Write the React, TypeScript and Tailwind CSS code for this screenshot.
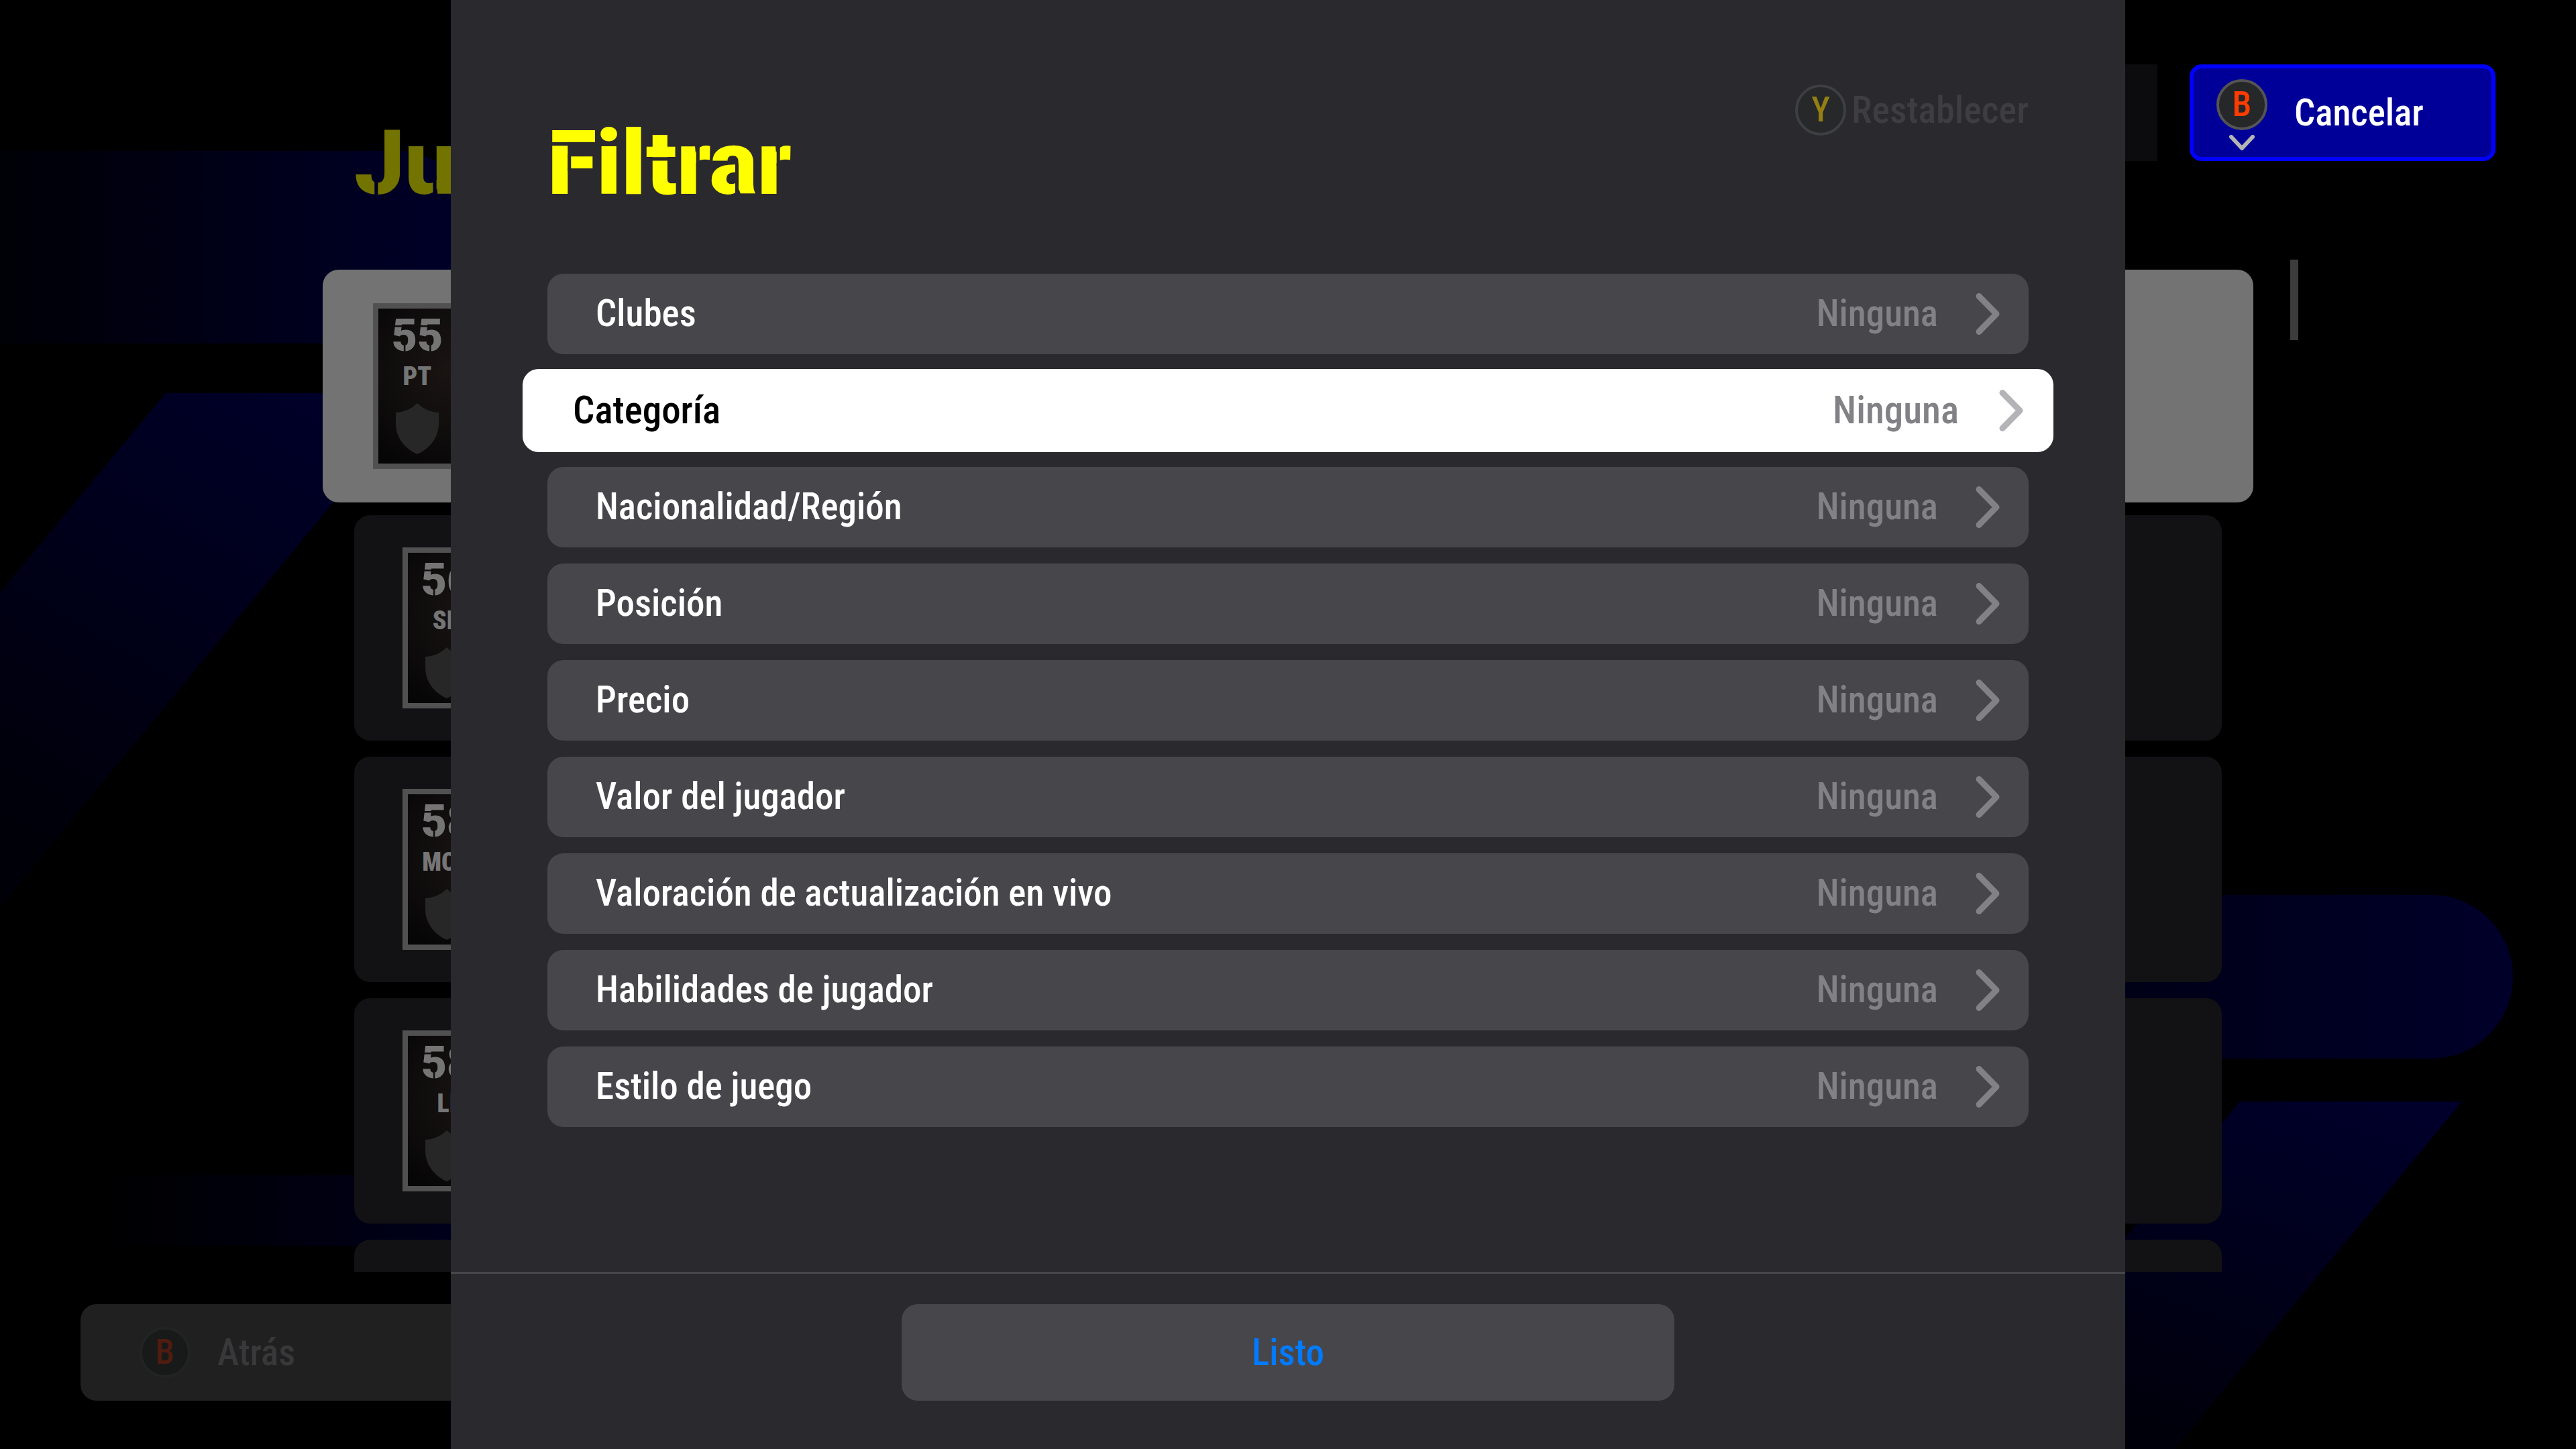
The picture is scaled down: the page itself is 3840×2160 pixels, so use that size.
const filters = [
  'Clubes',
  'Categoría',
  'Nacionalidad/Región',
  'Posición',
  'Precio',
  'Valor del jugador',
  'Valoración de actualización en vivo',
  'Habilidades de jugador',
  'Estilo de juego',
]

const players = [
  { rating: '55', position: 'PT' },
  { rating: '56', position: 'SD' },
  { rating: '58', position: 'MCO' },
  { rating: '58', position: 'LI' },
]

function Backdrop() {
  return (
    <svg className="absolute inset-0 size-full" viewBox="0 0 3840 2160" preserveAspectRatio="xMidYMid slice" aria-hidden="true">
      <defs>
        <linearGradient id="band" x1="0" x2="1">
          <stop offset="0" stopColor="#000006" />
          <stop offset="0.75" stopColor="#000022" />
          <stop offset="1" stopColor="#00002a" />
        </linearGradient>
        <linearGradient id="fall" x1="0.8" y1="0" x2="0.3" y2="1">
          <stop offset="0" stopColor="#00002a" />
          <stop offset="1" stopColor="#000008" />
        </linearGradient>
        <linearGradient id="low" x1="0" x2="1">
          <stop offset="0" stopColor="#000000" />
          <stop offset="1" stopColor="#00001c" />
        </linearGradient>
      </defs>
      <path d="M0 225H597a144 144 0 0 1 0 287H0Z" fill="url(#band)" />
      <path d="M247 586H631L0 1352V883Z" fill="url(#fall)" />
      <path d="M140 1752H700V1857H140Z" fill="url(#low)" />
      <path d="M2700 1334H3624a122 122 0 0 1 0 244H2700Z" fill="url(#band)" />
      <path d="M3339 1642H3670L3242 2160H2903Z" fill="url(#fall)" />
    </svg>
  )
}

/* Thin breaks across heavy letters, in thousandths of an em. */
function StencilCuts({ d, width, className }: { d: string; width: number; className: string }) {
  return (
    <svg className={'absolute top-0 left-0 h-full ' + className} viewBox={`0 0 ${width} 1000`} preserveAspectRatio="xMinYMid meet" fill="none" stroke="currentColor" strokeWidth="38" aria-hidden="true">
      <path d={d} />
    </svg>
  )
}

function PadButton({ letter, className }: { letter: string; className: string }) {
  return (
    <span className={'flex size-[76px] shrink-0 items-center justify-center rounded-full border-4 text-[52px] leading-none font-medium ' + className}>
      {letter}
    </span>
  )
}

function Chevron({ className }: { className: string }) {
  return (
    <svg viewBox="0 0 37 64" className={'h-16 w-[37px] shrink-0 ' + className} fill="none" stroke="currentColor" strokeWidth="9" strokeLinecap="round" strokeLinejoin="round" aria-hidden="true">
      <path d="M5 5.500L31 32L5 58.500" />
    </svg>
  )
}

function Portrait({ rating, position }: { rating: string; position: string }) {
  return (
    <div className="flex h-full w-48 border-8 border-[#515151] bg-[#0c0a0a] bg-[radial-gradient(circle_at_60%_40%,#1a1412_0%,#110e0e_45%,#070606_90%)] text-[#757575]">
      <div className="flex w-[116px] flex-col items-center pt-2">
        <span className="relative font-[Roboto] text-[66px] leading-none font-black">
          {rating}
          <StencilCuts
            width={1160}
            className="text-[#110e0e]"
            d={rating === '55' ? 'M60 278H260M290 700V870M640 278H840M870 700V870' : 'M60 278H260M290 700V870'}
          />
        </span>
        <span className="mt-2 text-[38px] leading-none font-black">{position}</span>
        <svg viewBox="0 0 64 76" className="mt-[21px] h-[76px] w-16" aria-hidden="true">
          <path d="M32 0Q45 13 64 14V30C64 52 50 68 32 76C14 68 0 52 0 30V14Q19 13 32 0Z" fill="#272727" />
        </svg>
      </div>
    </div>
  )
}

function PageBehind() {
  return (
    <div className="relative flex h-screen flex-col overflow-hidden" aria-hidden="true">
      <Backdrop />
      <header className="relative flex h-[402px] shrink-0 items-start justify-between pt-24 pr-[624px] pl-[528px]">
        <div className="pt-[81px]">
          <p className="relative font-[Roboto] text-[134px] leading-none font-black text-[#737300]">
            Ju
            <StencilCuts width={1140} className="text-[#000026]" d="M245 690V870M896 640V870" />
          </p>
        </div>
        <div className="h-36 w-[456px] bg-[#0c0c0e]" />
      </header>
      <div className="absolute top-[387px] right-[414px] h-[120px] w-3 bg-[#3c3c3c]" />
      <div className="relative flex min-h-0 flex-1 flex-col gap-6 overflow-hidden px-[528px]">
        {players.map((player, i) =>
          i === 0 ? (
            <div key={i} className="-mx-[47px] -mb-[5px] h-[347px] shrink-0 rounded-3xl bg-[#737373] py-[50px] pl-[75px]">
              <Portrait {...player} />
            </div>
          ) : (
            <div key={i} className="h-[336px] shrink-0 rounded-3xl bg-[#121214] py-12 pl-[72px]">
              <Portrait {...player} />
            </div>
          ),
        )}
        <div className="h-[336px] shrink-0 rounded-3xl bg-[#121214]" />
      </div>
      <footer className="relative h-[264px] shrink-0 px-[120px] pt-12">
        <button type="button" tabIndex={-1} className="flex h-36 w-[1152px] items-center gap-10 rounded-3xl bg-[#202020] pl-[88px] text-[55px] leading-none font-medium text-[#38383a]">
          <PadButton letter="B" className="border-[#222424] bg-[#181a1a] text-[#4f1c0f]" />
          Atrás
        </button>
      </footer>
    </div>
  )
}

function FilterRow({ label, selected }: { label: string; selected: boolean }) {
  return (
    <button
      type="button"
      className={
        selected
          ? '-mx-[37px] -my-0.5 flex h-[124px] items-center rounded-3xl bg-white pr-11 pl-[75px] text-[57px] leading-none font-medium text-black'
          : 'flex h-[120px] items-center rounded-3xl bg-[#47464b] pr-[42px] pl-[72px] text-[55px] leading-none font-medium text-white'
      }
    >
      <span className="pb-0.5">{label}</span>
      <span className="ml-auto pb-0.5 text-[#828186]">Ninguna</span>
      <Chevron className={selected ? 'ml-[60px] text-[#b4b3b8]' : 'ml-14 text-[#828186]'} />
    </button>
  )
}

export default function App() {
  return (
    <main className="relative bg-black font-['Roboto_Condensed',Roboto,sans-serif]">
      <PageBehind />
      <div className="fixed inset-0 flex justify-center">
        <section role="dialog" aria-label="Filtrar" className="flex w-[65%] flex-col bg-[#2a292e]">
          <header className="flex h-[408px] shrink-0 items-start justify-between px-36 pt-[126px]">
            <div className="pt-[51px]">
              <h1 className="relative font-[Roboto] text-[134px] leading-none font-black text-[#ffff00]">
                Filtrar
                <StencilCuts
                  width={2710}
                  className="text-[#2a292e]"
                  d="M40 281H250M244 400V580M1150 447H1350M1674 290V520M2108 500V870M2569 290V520"
                />
              </h1>
            </div>
            <button type="button" className="flex items-center gap-2 text-[56px] leading-none font-medium text-[#3e3d42]">
              <PadButton letter="Y" className="border-[#3e3f43] bg-[#26282a] text-[#937f12]" />
              Restablecer
            </button>
          </header>
          <div className="flex flex-1 flex-col gap-6 px-36">
            {filters.map((label) => (
              <FilterRow key={label} label={label} selected={label === 'Categoría'} />
            ))}
          </div>
          <footer className="flex h-[264px] shrink-0 justify-center border-t-3 border-[#47464b] pt-[45px]">
            <button type="button" className="h-36 w-[1152px] rounded-3xl bg-[#47464b] text-[55px] leading-none font-medium text-[#007bff]">
              Listo
            </button>
          </footer>
        </section>
        <button type="button" className="absolute top-24 right-[120px] flex h-36 w-[456px] gap-10 rounded-[18px] border-6 border-[#0000ff] bg-[#000099] pl-[34px] text-[55px] leading-none font-medium text-white">
          <span className="flex flex-col items-center gap-[7px] pt-4">
            <PadButton letter="B" className="border-[#545454] bg-[#262729] text-[#ff3c00]" />
            <svg viewBox="0 0 38 24" className="h-6 w-[38px] text-[#b4b4b4]" fill="none" stroke="currentColor" strokeWidth="6" strokeLinecap="round" strokeLinejoin="round" aria-hidden="true">
              <path d="M3 3L19 20L35 3" />
            </svg>
          </span>
          <span className="self-center">Cancelar</span>
        </button>
      </div>
    </main>
  )
}
